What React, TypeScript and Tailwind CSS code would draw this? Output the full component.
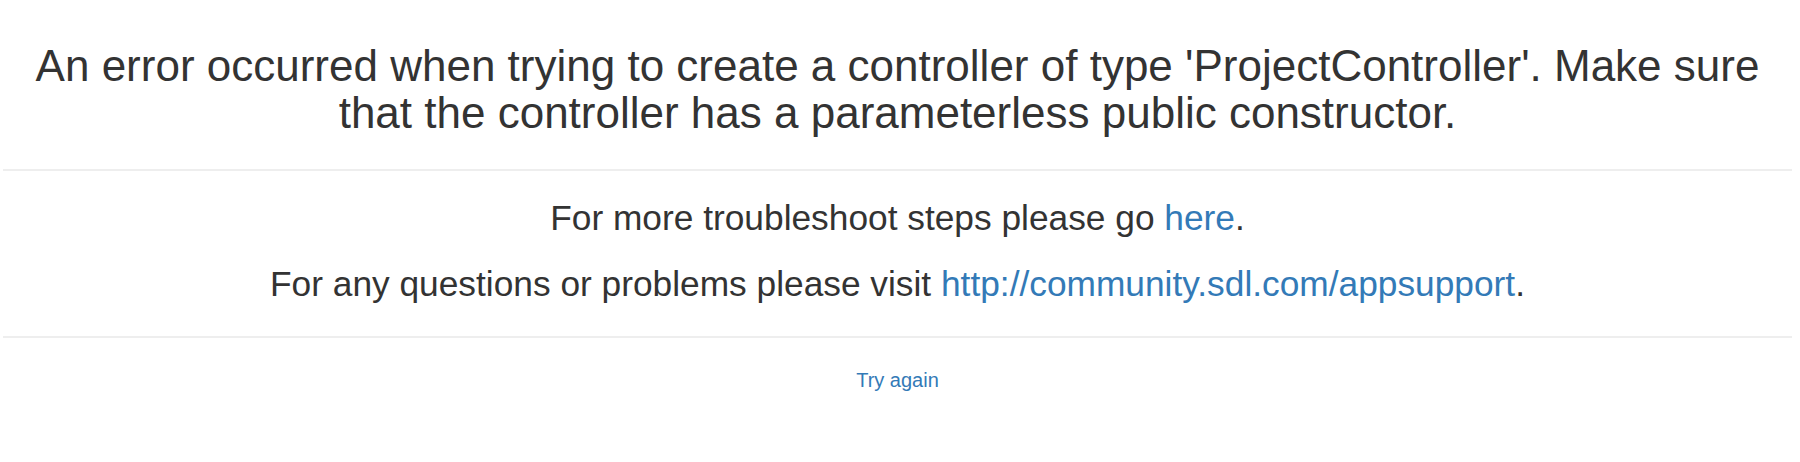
import React from "react";

export default function App() {
  return (
    <div
      className="w-[1795px] bg-white text-[#333333] text-center"
      style={{ fontFamily: '"Liberation Sans", Arial, sans-serif' }}
    >
      <h1 className="pt-[42px] text-[44px] leading-[47px] font-normal m-0">
        An error occurred when trying to create a controller of type 'ProjectController'. Make sure
        <br />
        that the controller has a parameterless public constructor.
      </h1>
      <div className="mt-[33px] mx-[3px] h-[2px] bg-[#eeeeee]" />
      <div className="pt-[28px] text-[35.3px] leading-[38px]">
        <p>
          For more troubleshoot steps please go <a className="text-[#337ab7]">here</a>.
        </p>
        <p className="mt-[28px]">
          For any questions or problems please visit{" "}
          <a className="text-[#337ab7]">http://community.sdl.com/appsupport</a>.
        </p>
      </div>
      <div className="mt-[33px] mx-[3px] h-[2px] bg-[#eeeeee]" />
      <div className="pt-[31px] pb-[72px] text-[20px] leading-[22px]">
        <a className="text-[#337ab7]">Try again</a>
      </div>
    </div>
  );
}
